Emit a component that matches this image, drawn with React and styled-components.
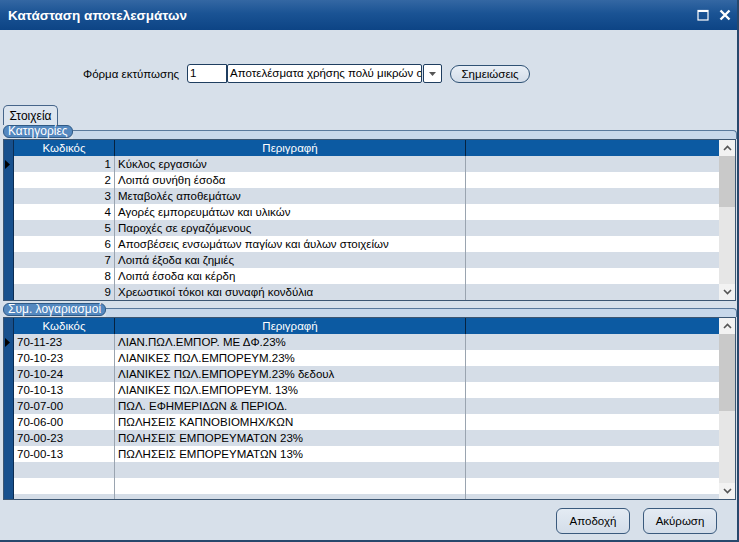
import React from "react";
import styled, { createGlobalStyle } from "styled-components";

const GlobalStyle = createGlobalStyle`
  html, body {
    margin: 0;
    padding: 0;
  }
  body {
    font-family: "Liberation Sans", Arial, sans-serif;
    font-size: 11px;
    color: #000;
  }
`;

const Window = styled.div`
  width: 739px;
  height: 542px;
  box-sizing: border-box;
  background: #d7e0ea;
  border-right: 2px solid #27486c;
  border-bottom: 2px solid #27486c;
  display: flex;
  flex-direction: column;
  overflow: hidden;
`;

const TitleBar = styled.div`
  height: 30px;
  flex-shrink: 0;
  display: flex;
  align-items: center;
  justify-content: space-between;
  padding: 0 6px 0 8px;
  background: linear-gradient(#3467a3 0%, #1a5394 45%, #0d4485 100%);
  color: #fff;
  font-weight: bold;
  font-size: 13.5px;
`;

const TitleButtons = styled.div`
  display: flex;
  align-items: center;
  gap: 10px;
`;

const FormRow = styled.div`
  display: flex;
  align-items: center;
  height: 19px;
  margin-top: 34px;
  padding-left: 83px;
`;

const Label = styled.span`
  margin-right: 8px;
  font-size: 11.5px;
`;

const Field = styled.div`
  box-sizing: border-box;
  height: 19px;
  width: ${(p) => p.$w}px;
  background: #fff;
  border: 1px solid #1f3e60;
  border-radius: ${(p) => p.$r || "2px"};
  padding-left: 2px;
  line-height: 17px;
  font-size: 11.5px;
  white-space: nowrap;
  overflow: hidden;
`;

const ComboButton = styled.div`
  box-sizing: border-box;
  width: 19px;
  height: 19px;
  margin-left: 1px;
  background: #fff;
  border: 1px solid #1f3e60;
  border-radius: 2px;
  display: flex;
  align-items: center;
  justify-content: center;
`;

const PillButton = styled.div`
  box-sizing: border-box;
  margin-left: 8px;
  width: 80px;
  height: 18px;
  border: 1px solid #2f5275;
  border-radius: 9px;
  background: linear-gradient(#e9eff6, #d3dde9);
  display: flex;
  align-items: center;
  justify-content: center;
  font-size: 11.5px;
`;

const Tab = styled.div`
  box-sizing: border-box;
  margin: 22px 0 0 3px;
  width: 55px;
  height: 20px;
  border: 1px solid #46658a;
  border-bottom: none;
  border-radius: 5px 5px 0 0;
  background: #dce5ef;
  display: flex;
  align-items: center;
  justify-content: center;
  font-size: 12px;
`;

const Group = styled.div`
  margin: ${(p) => p.$top}px 0 0 3px;
  width: 733px;
  display: flex;
  flex-direction: column;
`;

const GroupHeader = styled.div`
  display: flex;
  height: 14px;
`;

const Legend = styled.div`
  box-sizing: border-box;
  height: 13px;
  padding: 0 4px;
  border: 1px solid #2f5a86;
  border-radius: 6px;
  background: #5488bf;
  color: #fff;
  font-size: 12px;
  line-height: 11px;
  white-space: nowrap;
`;

const Band = styled.div`
  flex: 1;
  margin-top: 5px;
  margin-right: -1px;
  border-top: 1px solid #59799c;
  border-right: 1px solid #59799c;
  border-top-right-radius: 4px;
  background: #c8d8ea;
`;

const Grid = styled.div`
  box-sizing: border-box;
  height: ${(p) => p.$h}px;
  border: 1px solid #3c5672;
  display: flex;
  background: #fff;
`;

const GridMain = styled.div`
  flex: 1;
  display: flex;
  flex-direction: column;
  overflow: hidden;
`;

const HeadRow = styled.div`
  display: flex;
  height: 16px;
  flex-shrink: 0;
  background: #0c5aa2;
  color: #fff;
  line-height: 16px;
  font-size: 11.5px;
`;

const Row = styled.div`
  display: flex;
  height: 16px;
  flex-shrink: 0;
  line-height: 17px;
  font-size: 11.5px;
  background: ${(p) => (p.$odd ? "#d5dde7" : "#fff")};
`;

const Indicator = styled.div`
  width: 9px;
  flex-shrink: 0;
  background: #17508d;
  border-right: 1px solid #0b2c52;
  display: flex;
  align-items: center;
`;

const Cell = styled.div`
  box-sizing: border-box;
  width: ${(p) => p.$w}px;
  flex-shrink: 0;
  border-right: 1px solid ${(p) => (p.$head ? "#06223f" : "#9aa4b0")};
  padding: 0 3px;
  text-align: ${(p) => p.$align || "left"};
  white-space: nowrap;
  overflow: hidden;
`;

const Rest = styled.div`
  flex: 1;
`;

const Scrollbar = styled.div`
  width: 16px;
  flex-shrink: 0;
  background: #e6e6e6;
  display: flex;
  flex-direction: column;
`;

const Arrow = styled.div`
  height: 16px;
  flex-shrink: 0;
  background: #f2f2f2;
  display: flex;
  align-items: center;
  justify-content: center;
`;

const Thumb = styled.div`
  height: ${(p) => p.$h}px;
  flex-shrink: 0;
  background: #c9c9c9;
`;

const Track = styled.div`
  flex: 1;
`;

const Footer = styled.div`
  flex: 1;
  display: flex;
  justify-content: flex-end;
  align-items: flex-start;
  gap: 13px;
  padding: 8px 20px 0 0;
`;

const Button = styled.div`
  box-sizing: border-box;
  width: 74px;
  height: 26px;
  border: 1px solid #3a5a7d;
  border-radius: 6px;
  background: linear-gradient(#e4ebf3, #d3dde9);
  display: flex;
  align-items: center;
  justify-content: center;
  font-size: 11.5px;
`;

const Chevron = ({ up }) => (
  <svg width="9" height="6" viewBox="0 0 9 6">
    <polyline
      points={up ? "1,5 4.5,1.5 8,5" : "1,1 4.5,4.5 8,1"}
      fill="none"
      stroke="#555"
      strokeWidth="1.6"
    />
  </svg>
);

const categories = [
  "Κύκλος εργασιών",
  "Λοιπά συνήθη έσοδα",
  "Μεταβολές αποθεμάτων",
  "Αγορές εμπορευμάτων και υλικών",
  "Παροχές σε εργαζόμενους",
  "Αποσβέσεις ενσωμάτων παγίων και άυλων στοιχείων",
  "Λοιπά έξοδα και ζημιές",
  "Λοιπά έσοδα και κέρδη",
  "Χρεωστικοί τόκοι και συναφή κονδύλια",
];

const accounts = [
  ["70-11-23", "ΛΙΑΝ.ΠΩΛ.ΕΜΠΟΡ. ΜΕ ΔΦ.23%"],
  ["70-10-23", "ΛΙΑΝΙΚΕΣ ΠΩΛ.ΕΜΠΟΡΕΥΜ.23%"],
  ["70-10-24", "ΛΙΑΝΙΚΕΣ ΠΩΛ.ΕΜΠΟΡΕΥΜ.23% δεδουλ"],
  ["70-10-13", "ΛΙΑΝΙΚΕΣ ΠΩΛ.ΕΜΠΟΡΕΥΜ. 13%"],
  ["70-07-00", "ΠΩΛ. ΕΦΗΜΕΡΙΔΩΝ & ΠΕΡΙΟΔ."],
  ["70-06-00", "ΠΩΛΗΣΕΙΣ ΚΑΠΝΟΒΙΟΜΗΧ/ΚΩΝ"],
  ["70-00-23", "ΠΩΛΗΣΕΙΣ ΕΜΠΟΡΕΥΜΑΤΩΝ 23%"],
  ["70-00-13", "ΠΩΛΗΣΕΙΣ ΕΜΠΟΡΕΥΜΑΤΩΝ 13%"],
  ["", ""],
  ["", ""],
  ["", ""],
];

const Pointer = () => (
  <svg width="7" height="9" viewBox="0 0 7 9">
    <polygon points="1,0 6,4.5 1,9" fill="#000" />
  </svg>
);

const DataGrid = ({ rows, height, thumb, codeAlign }) => (
  <Grid $h={height}>
    <GridMain>
      <HeadRow>
        <Indicator />
        <Cell $w={101} $head $align="center">
          Κωδικός
        </Cell>
        <Cell $w={351} $head $align="center">
          Περιγραφή
        </Cell>
        <Rest />
      </HeadRow>
      {rows.map(([code, desc], i) => (
        <Row key={i} $odd={i % 2 === 0}>
          <Indicator>{i === 0 && <Pointer />}</Indicator>
          <Cell $w={101} $align={codeAlign}>
            {code}
          </Cell>
          <Cell $w={351}>{desc}</Cell>
          <Rest />
        </Row>
      ))}
    </GridMain>
    <Scrollbar>
      <Arrow>
        <Chevron up />
      </Arrow>
      <Thumb $h={thumb} />
      <Track />
      <Arrow>
        <Chevron />
      </Arrow>
    </Scrollbar>
  </Grid>
);

const App = () => {
  return (
    <>
      <GlobalStyle />
      <Window>
        <TitleBar>
          <span>Κατάσταση αποτελεσμάτων</span>
          <TitleButtons>
            <svg width="12" height="12" viewBox="0 0 12 12">
              <rect x="1" y="1.5" width="10" height="9.5" fill="none" stroke="#fff" strokeWidth="1.2" />
              <line x1="1" y1="2" x2="11" y2="2" stroke="#fff" strokeWidth="2" />
            </svg>
            <svg width="12" height="12" viewBox="0 0 12 12">
              <path d="M1.5 1.5 L10.5 10.5 M10.5 1.5 L1.5 10.5" stroke="#fff" strokeWidth="2.4" />
            </svg>
          </TitleButtons>
        </TitleBar>

        <FormRow>
          <Label>Φόρμα εκτύπωσης</Label>
          <Field $w={40} $r="3px 0 0 3px">
            1
          </Field>
          <Field $w={195}>Αποτελέσματα χρήσης πολύ μικρών οντοτήτων</Field>
          <ComboButton>
            <svg width="7" height="4" viewBox="0 0 7 4">
              <polygon points="0,0 7,0 3.5,4" fill="#555" />
            </svg>
          </ComboButton>
          <PillButton>Σημειώσεις</PillButton>
        </FormRow>

        <Tab>Στοιχεία</Tab>

        <Group $top={0}>
          <GroupHeader>
            <Legend>Κατηγορίες</Legend>
            <Band />
          </GroupHeader>
          <DataGrid
            rows={categories.map((c, i) => [String(i + 1), c])}
            height={162}
            thumb={51}
            codeAlign="right"
          />
        </Group>

        <Group $top={2}>
          <GroupHeader>
            <Legend>Συμ. λογαριασμοί</Legend>
            <Band />
          </GroupHeader>
          <DataGrid rows={accounts} height={183} thumb={77} codeAlign="left" />
        </Group>

        <Footer>
          <Button>Αποδοχή</Button>
          <Button>Ακύρωση</Button>
        </Footer>
      </Window>
    </>
  );
};

export default App;
